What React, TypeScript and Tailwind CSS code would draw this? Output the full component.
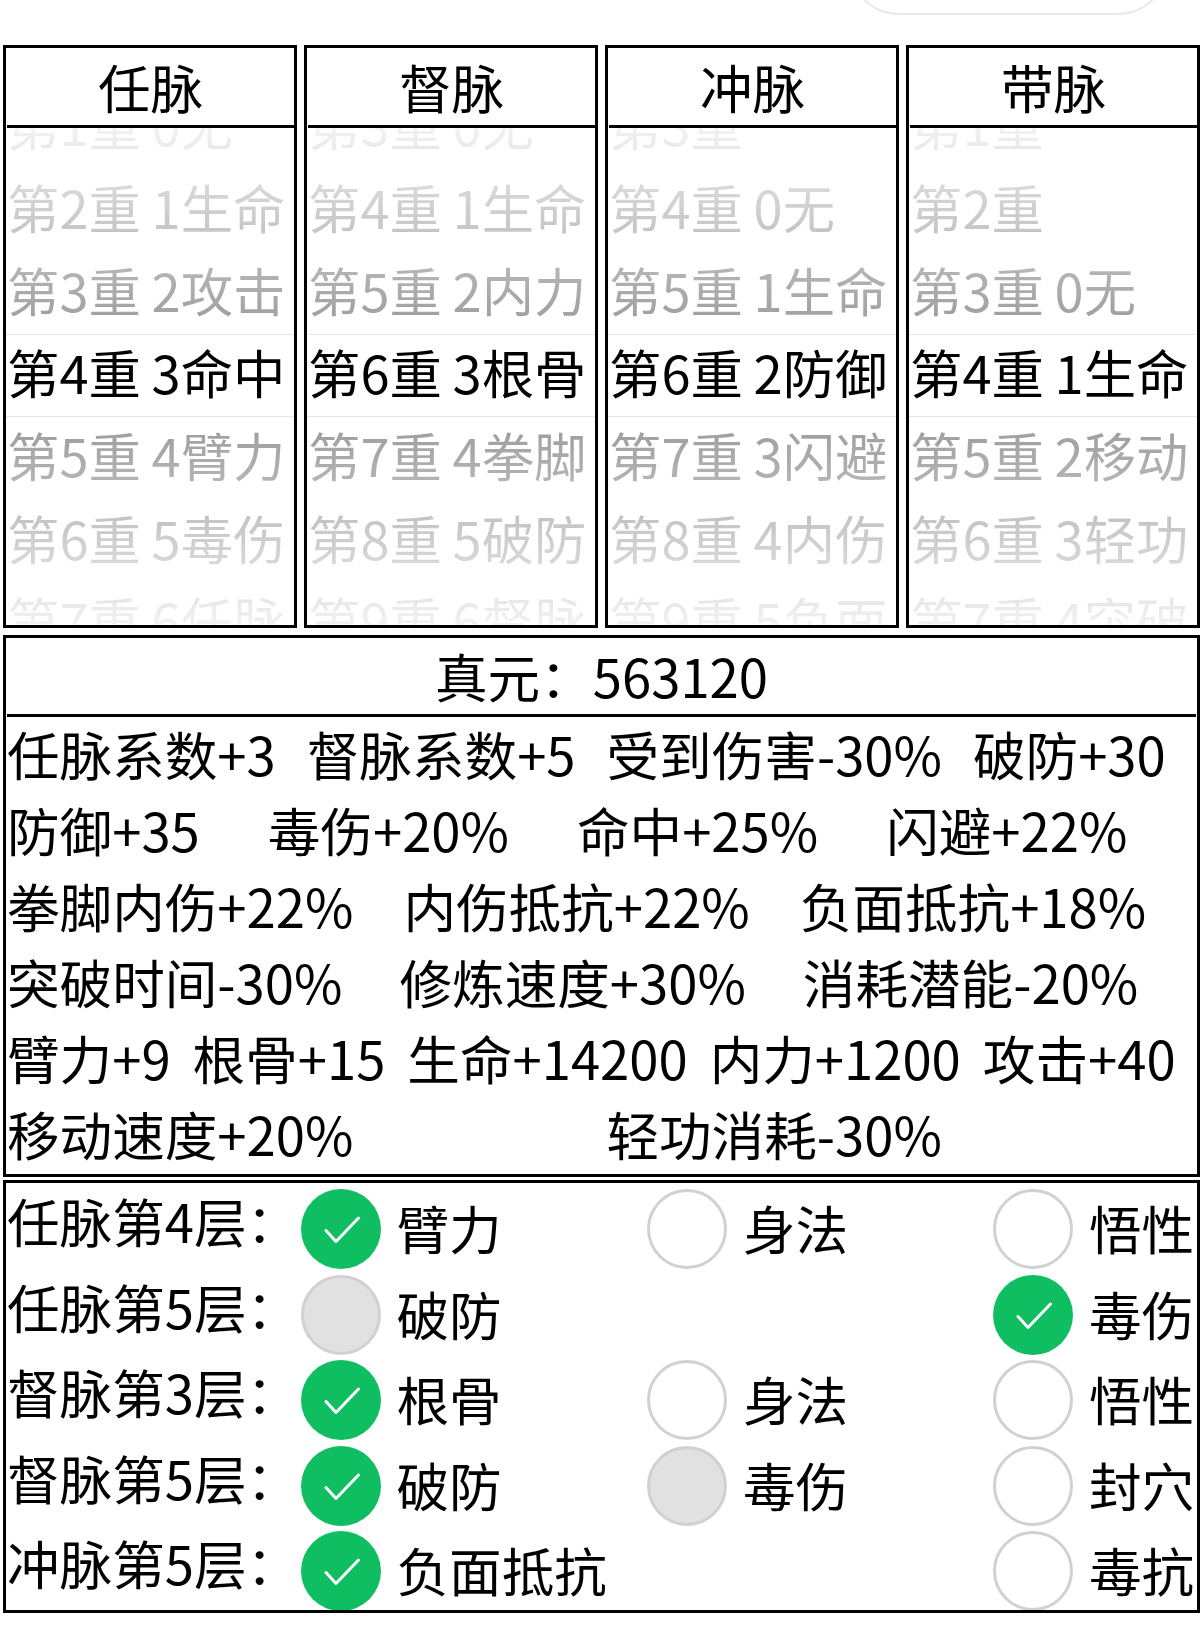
const FONT = "font-['Noto_Sans_CJK_SC','Noto_Sans',sans-serif]";

const pickers = [
  {
    title: '任脉',
    items: ['第1重 0无', '第2重 1生命', '第3重 2攻击', '第4重 3命中', '第5重 4臂力', '第6重 5毒伤', '第7重 6任脉'],
  },
  {
    title: '督脉',
    items: ['第3重 0无', '第4重 1生命', '第5重 2内力', '第6重 3根骨', '第7重 4拳脚', '第8重 5破防', '第9重 6督脉'],
  },
  {
    title: '冲脉',
    items: ['第3重', '第4重 0无', '第5重 1生命', '第6重 2防御', '第7重 3闪避', '第8重 4内伤', '第9重 5负面'],
  },
  {
    title: '带脉',
    items: ['第1重', '第2重', '第3重 0无', '第4重 1生命', '第5重 2移动', '第6重 3轻功', '第7重 4突破'],
  },
];

const statRows = [
  { gap: 'gap-x-[31px]', items: ['任脉系数+3', '督脉系数+5', '受到伤害-30%', '破防+30'] },
  { gap: 'gap-x-[68px]', items: ['防御+35', '毒伤+20%', '命中+25%', '闪避+22%'] },
  { gap: 'gap-x-[50px]', items: ['拳脚内伤+22%', '内伤抵抗+22%', '负面抵抗+18%'] },
  { gap: 'gap-x-[57px]', items: ['突破时间-30%', '修炼速度+30%', '消耗潜能-20%'] },
  { gap: 'gap-x-[22px]', items: ['臂力+9', '根骨+15', '生命+14200', '内力+1200', '攻击+40'] },
  { gap: 'gap-x-[253px]', items: ['移动速度+20%', '轻功消耗-30%'] },
];

type Opt = { label: string; state: 'on' | 'off' | 'disabled' } | null;

const choiceRows: { label: string; opts: Opt[] }[] = [
  {
    label: '任脉第4层：',
    opts: [
      { label: '臂力', state: 'on' },
      { label: '身法', state: 'off' },
      { label: '悟性', state: 'off' },
    ],
  },
  {
    label: '任脉第5层：',
    opts: [{ label: '破防', state: 'disabled' }, null, { label: '毒伤', state: 'on' }],
  },
  {
    label: '督脉第3层：',
    opts: [
      { label: '根骨', state: 'on' },
      { label: '身法', state: 'off' },
      { label: '悟性', state: 'off' },
    ],
  },
  {
    label: '督脉第5层：',
    opts: [
      { label: '破防', state: 'on' },
      { label: '毒伤', state: 'disabled' },
      { label: '封穴', state: 'off' },
    ],
  },
  {
    label: '冲脉第5层：',
    opts: [{ label: '负面抵抗', state: 'on' }, null, { label: '毒抗', state: 'off' }],
  },
];

function Picker({ title, items }: { title: string; items: string[] }) {
  return (
    <div className="flex-1 min-w-0 h-[583px] border-[3px] border-black flex flex-col">
      <div className="ml-[1px] h-[80px] shrink-0 border-b-[3px] border-black flex items-center justify-center text-[52.6px] leading-none">
        {title}
      </div>
      <div className="relative flex-1 min-h-0 overflow-hidden flex flex-col justify-center pl-[1px] pb-[10px]">
        {items.map((item, i) => (
          <div key={i} className="h-[82.7px] shrink-0 flex items-center text-[52.4px] leading-none whitespace-pre [word-spacing:-1px]">
            {item}
          </div>
        ))}
        <div className="absolute inset-x-0 top-0 h-[207px] bg-gradient-to-b from-white/95 to-white/60 border-b border-b-[#e5e5e5]" />
        <div className="absolute inset-x-0 bottom-0 h-[209px] bg-gradient-to-t from-white/95 to-white/60 border-t border-t-[#e5e5e5]" />
      </div>
    </div>
  );
}

function Radio({ state }: { state: 'on' | 'off' | 'disabled' }) {
  if (state === 'on') {
    return (
      <div className="w-[80px] h-[80px] rounded-full bg-[#10be62] shrink-0 flex items-center justify-center">
        <svg width="80" height="80" viewBox="0 0 80 80" fill="none">
          <path d="M25 41.5 L35 52.5 L57.5 29" stroke="white" strokeWidth="3" strokeLinecap="round" strokeLinejoin="round" />
        </svg>
      </div>
    );
  }
  return (
    <div
      className={
        state === 'disabled'
          ? 'w-[80px] h-[80px] rounded-full shrink-0 border-[3px] border-[#d1d1d1] bg-[#e1e1e1]'
          : 'w-[80px] h-[80px] rounded-full shrink-0 border-[3px] border-[#d1d1d1] bg-white'
      }
    />
  );
}

export default function App() {
  return (
    <div className={`${FONT} w-[1200px] h-[1647px] bg-white text-black overflow-hidden`}>
      <div className="h-[15px] ml-[847px] w-[323px] overflow-hidden">
        <div className="h-[106px] -mt-[91px] border-2 border-[#e9e9e9] rounded-[53px]" />
      </div>

      <div className="mt-[30px] pl-[3px] flex gap-[7px]">
        {pickers.map((p) => (
          <Picker key={p.title} title={p.title} items={p.items} />
        ))}
      </div>

      <div className="mt-[7px] ml-[3px] h-[542px] border-[3px] border-black">
        <div className="mx-[1px] h-[79px] pb-[2px] border-b-[3px] border-black flex items-center justify-center text-[52.6px] leading-none">
          真元：563120
        </div>
        {statRows.map((row, i) => (
          <div key={i} className={`flex h-[76px] items-center pl-[1px] pb-[3px] text-[52.6px] leading-none whitespace-nowrap ${row.gap}`}>
            {row.items.map((s) => (
              <span key={s}>{s}</span>
            ))}
          </div>
        ))}
      </div>

      <div className="mt-[3px] ml-[3px] h-[433px] border-[3px] border-black flex flex-col overflow-hidden">
        {choiceRows.map((row) => (
          <div key={row.label} className="h-[85.5px] shrink-0 flex items-start pt-[6px] whitespace-nowrap">
            <div className="w-[294.5px] shrink-0 pl-[1px] text-[52.6px] leading-[63px]">{row.label}</div>
            {row.opts.map((opt, i) => (
              <div
                key={i}
                className={
                  i === 0
                    ? 'w-[346.5px] shrink-0 flex items-start gap-[16px]'
                    : i === 1
                      ? 'w-[346px] shrink-0 flex items-start gap-[16px]'
                      : 'flex items-start gap-[16px]'
                }
              >
                {opt && <Radio state={opt.state} />}
                {opt && <span className="text-[52.6px] leading-[76px]">{opt.label}</span>}
              </div>
            ))}
          </div>
        ))}
      </div>
    </div>
  );
}
